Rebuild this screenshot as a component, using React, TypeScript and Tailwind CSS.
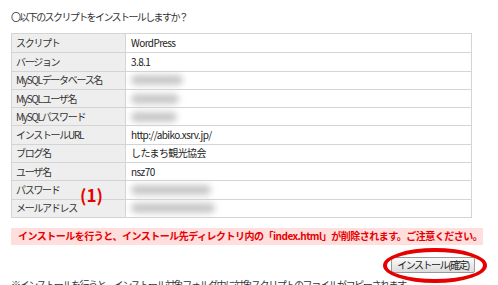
import React from 'react';

type Row = { label: string; value?: string; blur?: number };

const rows: Row[] = [
  { label: 'スクリプト', value: 'WordPress' },
  { label: 'バージョン', value: '3.8.1' },
  { label: 'MySQLデータベース名', blur: 52 },
  { label: 'MySQLユーザ名', blur: 48 },
  { label: 'MySQLパスワード', blur: 46 },
  { label: 'インストールURL', value: 'http://abiko.xsrv.jp/' },
  { label: 'ブログ名', value: 'したまち観光協会' },
  { label: 'ユーザ名', value: 'nsz70' },
  { label: 'パスワード', blur: 80 },
  { label: 'メールアドレス', blur: 84 },
];

const font = { fontFamily: '"Noto Sans CJK JP", "Noto Sans", sans-serif' };

const App: React.FC = () => {
  return (
    <div
      className="relative w-[498px] h-[285px] overflow-hidden bg-white text-[10px] text-[#333] leading-none whitespace-nowrap"
      style={font}
    >
      <div className="pl-[11px] pt-[12px] h-[33px] tracking-[-1.6px]">〇以下のスクリプトをインストールしますか？</div>

      <div className="ml-[11px] w-[461px] border border-[#d4d4d4]">
        {rows.map((row, i) => (
          <div
            key={i}
            className={`flex h-[18.3px] ${i > 0 ? 'border-t border-[#d4d4d4]' : ''}`}
          >
            <div className="w-[114px] shrink-0 bg-[#eeeeee] border-r border-[#d4d4d4] pl-[4px] flex items-center tracking-[-1.3px]">
              {row.label}
            </div>
            <div className="flex-1 pl-[5px] flex items-center text-[#222] tracking-[-0.6px]">
              {row.value}
              {row.blur && (
                <div
                  className="h-[10px] bg-[#c8c8c8] rounded-full blur-[3px]"
                  style={{ width: row.blur }}
                />
              )}
            </div>
          </div>
        ))}
      </div>

      <div className="absolute left-[80px] top-[186px] text-[17px] font-bold text-[#e60000]">(1)</div>

      <div className="ml-[11px] mt-[10px] w-[472px] h-[17px] bg-[#ffdede] flex items-center pl-[7px] font-bold text-[#e60000] tracking-[-0.5px]">
        インストールを行うと、インストール先ディレクトリ内の「index.html」が削除されます。ご注意ください。
      </div>

      <div className="flex justify-end pr-[23px] mt-[12px]">
        <div className="relative">
          <button
            className="w-[84px] h-[16px] border border-[#999] rounded-[2px] bg-gradient-to-b from-[#fafafa] to-[#dcdcdc] text-[10px] text-[#222] leading-none whitespace-nowrap tracking-[-1.5px] flex items-center justify-center"
            style={font}
          >
            インストール(確定)
          </button>
          <div className="absolute left-[-8px] top-[-9px] w-[104px] h-[35px] rounded-[50%] border-[4px] border-[#e60000]" />
        </div>
      </div>

      <div className="pl-[11px] mt-[7px] text-[#333] tracking-[-1.4px]">
        ※インストールを行うと、インストール対象フォルダ内に対象スクリプトのファイルがコピーされます。
      </div>
    </div>
  );
};

export default App;
